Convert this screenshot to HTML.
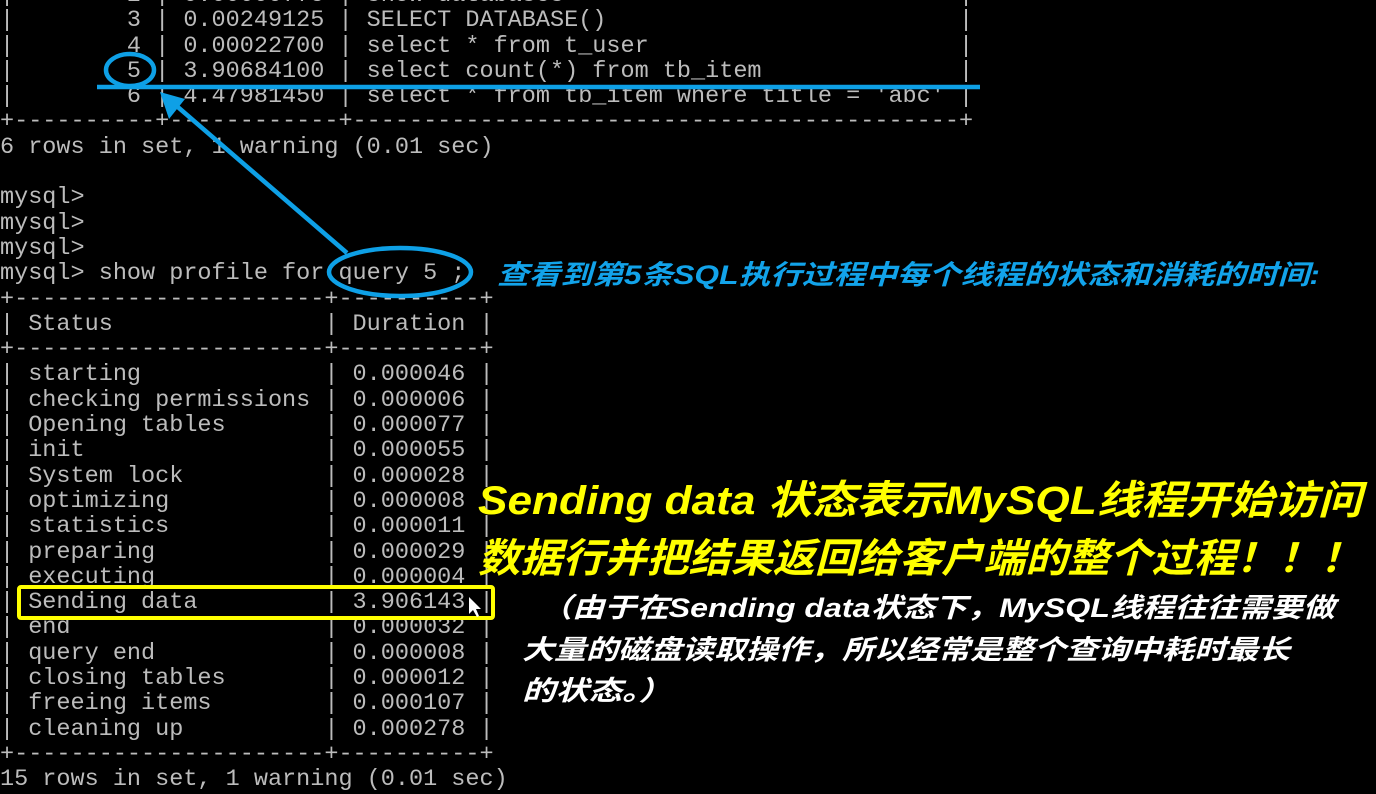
<!DOCTYPE html>
<html><head><meta charset="utf-8"><style>
html,body{margin:0;padding:0;background:#000;width:1376px;height:794px;overflow:hidden;position:relative}
pre{position:absolute;left:0;top:-17px;margin:0;font-family:"Liberation Mono",monospace;font-size:23.5px;line-height:25.3px;color:#bcbcbc;white-space:pre}
svg{position:absolute;left:0;top:0}
</style></head><body>
<pre>|        2 | 0.00000775 | show databases                            |
|        3 | 0.00249125 | SELECT DATABASE()                         |
|        4 | 0.00022700 | select * from t_user                      |
|        5 | 3.90684100 | select count(*) from tb_item              |
|        6 | 4.47981450 | select * from tb_item where title = 'abc' |
+----------+------------+-------------------------------------------+
6 rows in set, 1 warning (0.01 sec)

mysql>
mysql>
mysql>
mysql> show profile for query 5 ;
+----------------------+----------+
| Status               | Duration |
+----------------------+----------+
| starting             | 0.000046 |
| checking permissions | 0.000006 |
| Opening tables       | 0.000077 |
| init                 | 0.000055 |
| System lock          | 0.000028 |
| optimizing           | 0.000008 |
| statistics           | 0.000011 |
| preparing            | 0.000029 |
| executing            | 0.000004 |
| Sending data         | 3.906143 |
| end                  | 0.000032 |
| query end            | 0.000008 |
| closing tables       | 0.000012 |
| freeing items        | 0.000107 |
| cleaning up          | 0.000278 |
+----------------------+----------+
15 rows in set, 1 warning (0.01 sec)</pre>
<svg width="1376" height="794" xmlns="http://www.w3.org/2000/svg">
<g fill="none" stroke="#0ea0e6" stroke-width="4.5">
<ellipse cx="130" cy="70" rx="24" ry="16"/>
<line x1="97" y1="87" x2="980" y2="87"/>
<line x1="347" y1="253" x2="172" y2="102"/>
<ellipse cx="400" cy="272" rx="71" ry="24"/>
</g>
<polygon points="160,92 185,99 169,119" fill="#0ea0e6"/>
<rect x="19" y="587" width="474" height="31" fill="none" stroke="#ffff00" stroke-width="4" rx="2"/>
<polygon points="469,597 469,614 473,610 477,617 479,616 476,609 481,609" fill="#fff"/>
<g font-family="'Liberation Sans','Noto Sans CJK SC',sans-serif" font-weight="bold" font-style="italic">
<text x="497" y="284" font-size="27" fill="#12a3ea" textLength="823" lengthAdjust="spacingAndGlyphs">查看到第5条SQL执行过程中每个线程的状态和消耗的时间:</text>
<text x="478" y="514" font-size="40" fill="#ffff00" textLength="884" lengthAdjust="spacingAndGlyphs">Sending data 状态表示MySQL线程开始访问</text>
<text x="478" y="572" font-size="40" fill="#ffff00" textLength="884" lengthAdjust="spacingAndGlyphs">数据行并把结果返回给客户端的整个过程！！！</text>
<text x="540" y="617" font-size="27" fill="#fff" textLength="795" lengthAdjust="spacingAndGlyphs">（由于在Sending data状态下，MySQL线程往往需要做</text>
<text x="522" y="659" font-size="27" fill="#fff" textLength="768" lengthAdjust="spacingAndGlyphs">大量的磁盘读取操作，所以经常是整个查询中耗时最长</text>
<text x="522" y="700" font-size="27" fill="#fff" textLength="150" lengthAdjust="spacingAndGlyphs">的状态。）</text>
</g>
</svg>
</body></html>
